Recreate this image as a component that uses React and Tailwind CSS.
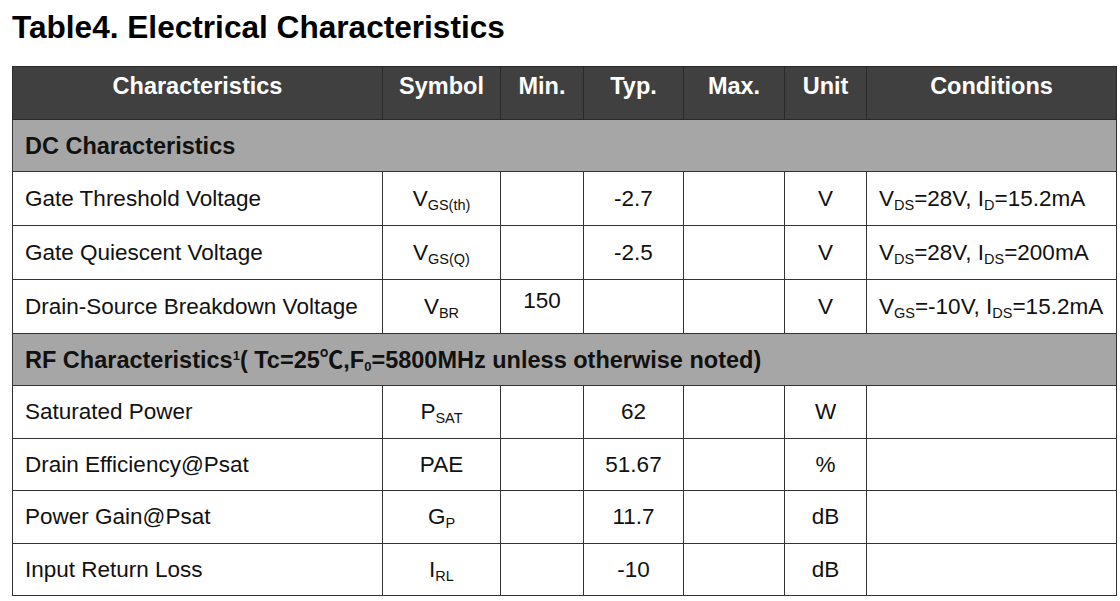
import React from "react";

const F = { fontFamily: '"Liberation Sans", Arial, "Noto Sans CJK SC", sans-serif' };

function Sub({ children }) {
  return <sub className="text-[14.5px] leading-none relative -bottom-[4px] align-baseline">{children}</sub>;
}

const cols = [370, 118, 83, 100, 101, 82, 250];

function HeadCell({ children }) {
  return (
    <th className="border border-[#2a2a2a] bg-[#404040] text-white font-bold text-[23.5px] leading-[26px] align-top pt-[6px] text-center">
      {children}
    </th>
  );
}

function Cell({ children, left, top }) {
  return (
    <td
      className={
        "border border-[#333333] text-[22.5px] leading-[26px] text-[#111] " +
        (left ? "text-left pl-[12px] " : "text-center ") +
        (top ? "align-top pt-[8px]" : "align-middle")
      }
    >
      {children}
    </td>
  );
}

function Section({ children, h }) {
  return (
    <tr className={h}>
      <td colSpan={7} className="border border-[#333333] bg-[#a6a6a6] font-bold text-[23.5px] leading-[26px] text-[#111] pl-[12px] align-middle">
        {children}
      </td>
    </tr>
  );
}

export default function App() {
  return (
    <div className="w-[1120px] h-[601px] bg-white overflow-hidden" style={F}>
      <div className="pl-[12px] pt-[11px] text-[31.6px] leading-[32px] font-bold text-black">
        Table4. Electrical Characteristics
      </div>
      <table className="ml-[12px] mt-[23px] w-[1104px] table-fixed border-collapse">
        <colgroup>
          {cols.map((w, i) => (
            <col key={i} style={{ width: w }} />
          ))}
        </colgroup>
        <thead>
          <tr className="h-[53px]">
            <HeadCell>Characteristics</HeadCell>
            <HeadCell>Symbol</HeadCell>
            <HeadCell>Min.</HeadCell>
            <HeadCell>Typ.</HeadCell>
            <HeadCell>Max.</HeadCell>
            <HeadCell>Unit</HeadCell>
            <HeadCell>Conditions</HeadCell>
          </tr>
        </thead>
        <tbody>
          <Section h="h-[52px]">DC Characteristics</Section>
          <tr className="h-[54px]">
            <Cell left>Gate Threshold Voltage</Cell>
            <Cell>V<Sub>GS(th)</Sub></Cell>
            <Cell></Cell>
            <Cell>-2.7</Cell>
            <Cell></Cell>
            <Cell>V</Cell>
            <Cell left>V<Sub>DS</Sub>=28V, I<Sub>D</Sub>=15.2mA</Cell>
          </tr>
          <tr className="h-[54px]">
            <Cell left>Gate Quiescent Voltage</Cell>
            <Cell>V<Sub>GS(Q)</Sub></Cell>
            <Cell></Cell>
            <Cell>-2.5</Cell>
            <Cell></Cell>
            <Cell>V</Cell>
            <Cell left>V<Sub>DS</Sub>=28V, I<Sub>DS</Sub>=200mA</Cell>
          </tr>
          <tr className="h-[54px]">
            <Cell left>Drain-Source Breakdown Voltage</Cell>
            <Cell>V<Sub>BR</Sub></Cell>
            <Cell top>150</Cell>
            <Cell></Cell>
            <Cell></Cell>
            <Cell>V</Cell>
            <Cell left>V<Sub>GS</Sub>=-10V, I<Sub>DS</Sub>=15.2mA</Cell>
          </tr>
          <Section h="h-[52px]">
            RF Characteristics<sup className="text-[13px] relative -top-[8px] align-baseline">1</sup>( Tc=25℃,F<sub className="text-[13px] relative -bottom-[3px] align-baseline">0</sub>=5800MHz unless otherwise noted)
          </Section>
          <tr className="h-[53px]">
            <Cell left>Saturated Power</Cell>
            <Cell>P<Sub>SAT</Sub></Cell>
            <Cell></Cell>
            <Cell>62</Cell>
            <Cell></Cell>
            <Cell>W</Cell>
            <Cell left></Cell>
          </tr>
          <tr className="h-[52px]">
            <Cell left>Drain Efficiency@Psat</Cell>
            <Cell>PAE</Cell>
            <Cell></Cell>
            <Cell>51.67</Cell>
            <Cell></Cell>
            <Cell>%</Cell>
            <Cell left></Cell>
          </tr>
          <tr className="h-[53px]">
            <Cell left>Power Gain@Psat</Cell>
            <Cell>G<Sub>P</Sub></Cell>
            <Cell></Cell>
            <Cell>11.7</Cell>
            <Cell></Cell>
            <Cell>dB</Cell>
            <Cell left></Cell>
          </tr>
          <tr className="h-[52px]">
            <Cell left>Input Return Loss</Cell>
            <Cell>I<Sub>RL</Sub></Cell>
            <Cell></Cell>
            <Cell>-10</Cell>
            <Cell></Cell>
            <Cell>dB</Cell>
            <Cell left></Cell>
          </tr>
        </tbody>
      </table>
    </div>
  );
}
